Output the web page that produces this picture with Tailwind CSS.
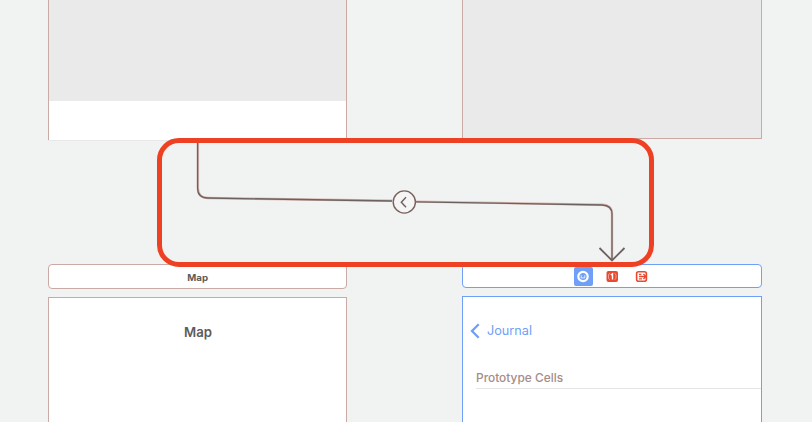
<!DOCTYPE html>
<html lang="en">
<head>
<meta charset="utf-8">
<title>Storyboard</title>
<script src="https://cdn.jsdelivr.net/npm/@tailwindcss/browser@4"></script>
</head>
<body class="bg-[#f1f3f2] font-['Inter','Liberation_Sans',sans-serif]">
<main class="relative flex h-[422px] w-[812px] gap-[115px] overflow-hidden pl-12">
  <!-- Map column -->
  <section class="flex w-[299px] shrink-0 flex-col">
    <div class="flex h-[140px] shrink-0 flex-col border-x border-[#c9aaa4] bg-white">
      <div class="h-[101px] bg-[#eaeaea]"></div>
    </div>
    <div class="h-px shrink-0 bg-[#e8e8e8]"></div>
    <header class="mt-[123px] flex h-[25px] shrink-0 items-center justify-center rounded-[4px] border border-[#c9aaa4] bg-white pt-[2px] pl-px">
      <span class="origin-center scale-x-[1.08] text-[9px] leading-none font-bold text-[#625b59]">Map</span>
    </header>
    <div class="mt-2 h-[125px] shrink-0 border border-b-0 border-[#c9aaa4] bg-white pt-[26px] pl-px text-center text-[13.2px] leading-[17px] font-semibold text-[#5f5b5a]">Map</div>
  </section>
  <!-- Journal column -->
  <section class="flex w-[300px] shrink-0 flex-col">
    <div class="h-[139px] border border-t-0 border-[#c9aaa4] bg-[#eaeaea]"></div>
    <header class="mt-[125px] flex h-6 items-center justify-center gap-[13px] rounded-[4px] border border-[#709ff8] bg-white">
      <span class="flex h-[19px] w-[19px] items-center justify-center rounded-[2px] bg-[#709ff8]">
        <svg width="13" height="13" viewBox="0 0 13 13"><circle cx="6" cy="6.5" r="4.7" fill="#709ff8" stroke="#fff" stroke-width="2.2"/><path d="M4.2 5.3v2.6h3.6V5.3" fill="none" stroke="#fff" stroke-width=".8"/></svg>
      </span>
      <svg class="-ml-[2px] h-[19px] w-4" viewBox="0 0 16 19"><rect x="2.5" y="4" width="11.5" height="11" rx="2" fill="#e9492f"/><path d="M6 6.3 4.5 7.5v4L6 12.7M10.5 6.3 12 7.5v4l-1.5 1.2" fill="none" stroke="#f4b4a8" stroke-width=".8"/><path d="M6.8 8 8.5 6.8v5.7" fill="none" stroke="#fff" stroke-width="1.4"/></svg>
      <svg class="mr-[2px] h-[19px] w-4" viewBox="0 0 16 19"><rect x="3.6" y="4.8" width="9.8" height="9.4" rx="2" fill="#fff" stroke="#e9492f" stroke-width="1.6"/><path d="M5.9 9.5h7M10.4 7l2.6 2.5-2.6 2.5M5.9 7.3h2.5M5.9 11.8h3.2" fill="none" stroke="#e9492f" stroke-width="1.3"/></svg>
    </header>
    <div class="mt-2 h-[126px] border border-b-0 border-[#709ff8] bg-white">
      <div class="flex h-[67px] items-center pl-[7px] text-[12.7px] text-[#709ff8]">
        <svg class="mr-[6px]" width="11" height="16" viewBox="0 0 11 16"><path d="M8.7 1.3 2 8l6.7 6.7" fill="none" stroke="#709ff8" stroke-width="2.3"/></svg>
        <span>Journal</span>
      </div>
      <div class="ml-[13px] flex h-[25px] items-end border-b border-[#e4e4e4] pb-[3px] text-[11.9px] leading-[15px] font-medium text-[#a58c87]">Prototype Cells</div>
    </div>
  </section>
  <!-- Segue and highlight frame -->
  <div class="absolute top-[138px] left-[157px] h-[129px] w-[497px] rounded-[22px] border-5 border-[#ee4023]"></div>
  <svg class="absolute inset-0" width="812" height="422" viewBox="0 0 812 422" fill="none">
    <path d="M197.9 143V188Q197.9 197.9 208 198L392 200.8M416 201.6L602 204.7Q612 205 612 214V260" stroke="#d6b6af" stroke-width="2.4"/>
    <path d="M197.6 143V188Q197.6 197.8 208 198L392 201M416 201.8L602 205Q612 205.3 612 214V260" stroke="#6d6260" stroke-width="1.3"/>
    <path d="M599.5 248 612 260.5 624.5 248" stroke="#6d6260" stroke-width="1.8"/>
    <circle cx="404.3" cy="202" r="11.1" fill="#f4f5f4" stroke="#79635f" stroke-width="1.4"/>
    <path d="M406 197.2 401.3 202.2 406 207.2" stroke="#6d5f5c" stroke-width="1.4"/>
  </svg>
</main>
</body>
</html>
